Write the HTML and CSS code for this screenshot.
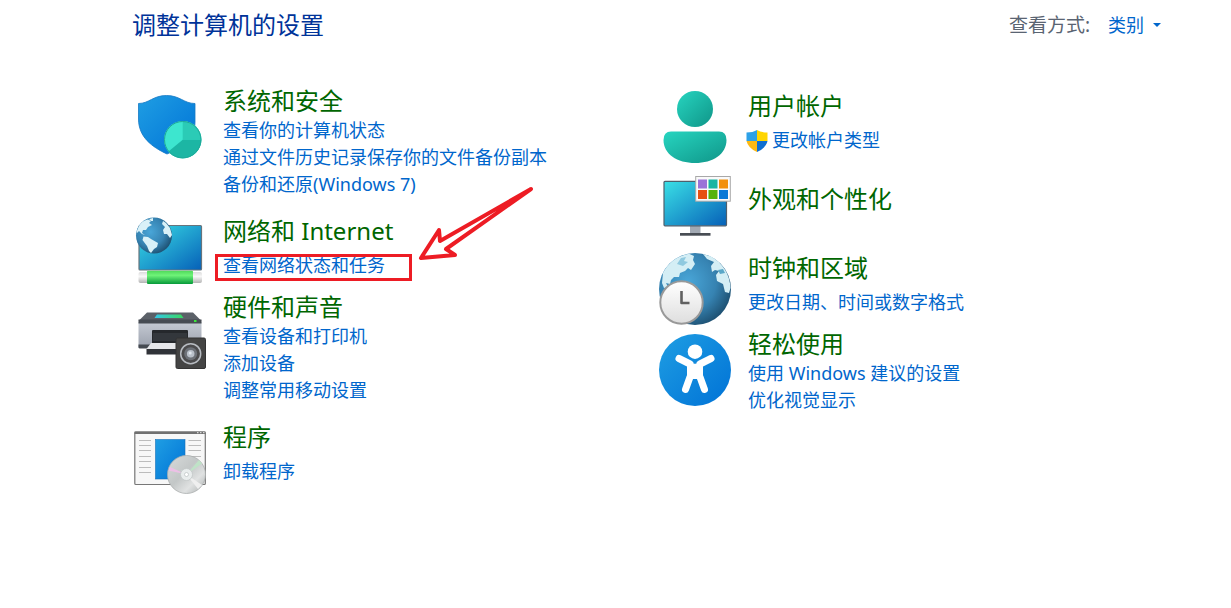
FILE: index.html
```html
<!DOCTYPE html>
<html lang="zh-CN">
<head>
    <meta charset="UTF-8">
    <meta name="viewport" content="width=device-width, initial-scale=1.0">
    <title>控制面板</title>
    <link rel="stylesheet" href="styles.css">
</head>
<body>
    <!-- Shared gradients -->
    <svg class="defs" width="0" height="0" aria-hidden="true">
        <defs>
            <linearGradient id="blue" x1="0" y1="0" x2="1" y2="1">
                <stop offset="0" stop-color="#1f9ee3"/>
                <stop offset="1" stop-color="#0072d6"/>
            </linearGradient>
            <linearGradient id="screen" x1="0" y1="0" x2="1" y2="1">
                <stop offset="0" stop-color="#3ae0e6"/>
                <stop offset="1" stop-color="#0660b8"/>
            </linearGradient>
            <linearGradient id="teal" x1="0" y1="0" x2="1" y2="1">
                <stop offset="0" stop-color="#27d5c0"/>
                <stop offset="1" stop-color="#0f9588"/>
            </linearGradient>
            <radialGradient id="ocean" cx="0.4" cy="0.4" r="0.65">
                <stop offset="0" stop-color="#49a6d8"/>
                <stop offset="0.6" stop-color="#3683b2"/>
                <stop offset="1" stop-color="#1d4f70"/>
            </radialGradient>
            <linearGradient id="cable" x1="0" y1="0" x2="0" y2="1">
                <stop offset="0" stop-color="#4fd95a"/>
                <stop offset="0.35" stop-color="#6ff378"/>
                <stop offset="1" stop-color="#069a3a"/>
            </linearGradient>
            <linearGradient id="cap" x1="0" y1="0" x2="0" y2="1">
                <stop offset="0" stop-color="#dcdcdc"/>
                <stop offset="0.4" stop-color="#f8f8f8"/>
                <stop offset="1" stop-color="#b4b4b4"/>
            </linearGradient>
            <linearGradient id="printer" x1="0" y1="0" x2="0" y2="1">
                <stop offset="0" stop-color="#c5cad3"/>
                <stop offset="1" stop-color="#9aa0ac"/>
            </linearGradient>
            <linearGradient id="glass" x1="0" y1="0" x2="1" y2="0">
                <stop offset="0" stop-color="#35c8e8"/>
                <stop offset="1" stop-color="#38d860"/>
            </linearGradient>
            <linearGradient id="disc" x1="0" y1="0" x2="1" y2="1">
                <stop offset="0" stop-color="#d8dbdb"/>
                <stop offset="0.45" stop-color="#c3c7c7"/>
                <stop offset="0.7" stop-color="#e0e2e2"/>
                <stop offset="1" stop-color="#a9adad"/>
            </linearGradient>
            <linearGradient id="dial" x1="0" y1="0" x2="0" y2="1">
                <stop offset="0" stop-color="#ffffff"/>
                <stop offset="1" stop-color="#dedede"/>
            </linearGradient>
        </defs>
    </svg>

    <header class="page-header">
        <h1>调整计算机的设置</h1>
        <div class="view-by">
            <label for="view">查看方式:</label>
            <span class="select-wrap">
                <select id="view">
                    <option selected>类别</option>
                    <option>大图标</option>
                    <option>小图标</option>
                </select>
            </span>
        </div>
    </header>

    <main class="categories">
        <div class="column">
            <section class="item multi">
                <svg class="icon" viewBox="0 0 72 72" aria-hidden="true">
                    <path d="M4.500 12.500C15 12.500 19 4.500 32.500 4.500S50 12.500 61 12.500V31C61 48 48 57 33 63C18 56 4.500 46 4.500 28Z" fill="url(#blue)" stroke="#1578c4" stroke-width="0.800"/>
                    <circle cx="48.700" cy="48.700" r="18.700" fill="#3de6cf"/>
                    <path d="M48.700 48.700V30A18.700 18.700 0 0 1 67.400 48.700Z" fill="#2bcbb6"/>
                    <path d="M48.700 48.700H67.400A18.700 18.700 0 0 1 34.500 60.500Z" fill="#1cb6a4"/>
                    <circle cx="48.700" cy="48.700" r="18.200" fill="none" stroke="#1fa898" stroke-width="1"/>
                </svg>
                <div class="text">
                    <h2><a href="#">系统和安全</a></h2>
                    <ul>
                        <li><a href="#">查看你的计算机状态</a></li>
                        <li><a href="#">通过文件历史记录保存你的文件备份副本</a></li>
                        <li><a href="#">备份和还原(Windows 7)</a></li>
                    </ul>
                </div>
            </section>

            <section class="item">
                <svg class="icon" viewBox="0 0 72 72" aria-hidden="true">
                    <rect x="5" y="9.500" width="62.500" height="44.500" rx="1" fill="url(#screen)" stroke="#68747c" stroke-width="1.200"/>
                    <rect x="4.500" y="56" width="63.500" height="11" rx="2" fill="url(#cap)"/>
                    <rect x="13" y="54.700" width="46" height="13.300" rx="1" fill="url(#cable)"/>
                    <circle cx="20" cy="19.500" r="18" fill="url(#ocean)"/>
                    <g fill="#d9f1f8">
                        <path d="M4.500 11C7 6 11 4 14 3.500L17 5L15 7L18 9L14 11L12 14L9 14L8 17L11 19L8 18L5 15L3 17L2.500 16Z"/>
                        <path d="M15 3L19 2L19 5L17 5Z"/>
                        <path d="M9.500 20.500L14 21L17 23L24 27L23 31L20 33L17 37L15 35L13 30L8.500 24Z"/>
                        <path d="M29 5L32 7L36 12L38 19L36 22L33 18L30 18L29 14L31 11L28 8Z"/>
                    </g>
                </svg>
                <div class="text">
                    <h2><a href="#">网络和 Internet</a></h2>
                    <ul>
                        <li class="marked"><a href="#">查看网络状态和任务</a></li>
                    </ul>
                </div>
                <svg class="arrow" viewBox="0 0 120 80" aria-hidden="true">
                    <path d="M116 6L25 58L24 47L6 75L40 72L31 66Z"/>
                </svg>
            </section>

            <section class="item multi">
                <svg class="icon" viewBox="0 0 72 72" aria-hidden="true">
                    <path d="M13 15.500H59L67.500 24H4.500Z" fill="#5b6168"/>
                    <path d="M23 17.500H47L49.500 21H20.500Z" fill="url(#glass)"/>
                    <path d="M4.500 25H67.500V51H4.500Z" fill="url(#printer)"/>
                    <path d="M4.500 22.500H67.500V26.500H4.500ZM4.500 47.500H67.500V50Q67.500 51.500 66 51.500H6Q4.500 51.500 4.500 50Z" fill="#464b52"/>
                    <rect x="60" y="23" width="2.500" height="2" fill="#39e639"/>
                    <path d="M18 34Q18 33 19 33H53Q54 33 54 34V48H18Z" fill="#25282c"/>
                    <path d="M19 36H53V44H19Z" fill="#33373c"/>
                    <path d="M17 46H55V52H12.500Z" fill="#e6e7ea"/>
                    <path d="M12.500 52H58V57.500H12.500Z" fill="#303338"/>
                    <rect x="42" y="41" width="29.500" height="30.500" rx="1.500" fill="#444" stroke="#333" stroke-width="1"/>
                    <circle cx="56.700" cy="56.700" r="10" fill="#4b4b4d" stroke="#b7bbc1" stroke-width="1.500"/>
                    <circle cx="56.700" cy="56.700" r="6.500" fill="#6d7178"/>
                    <circle cx="56.700" cy="56.700" r="3.800" fill="#b9c0ca"/>
                    <circle cx="56.200" cy="56" r="1.500" fill="#e1e7ef"/>
                </svg>
                <div class="text">
                    <h2><a href="#">硬件和声音</a></h2>
                    <ul>
                        <li><a href="#">查看设备和打印机</a></li>
                        <li><a href="#">添加设备</a></li>
                        <li><a href="#">调整常用移动设置</a></li>
                    </ul>
                </div>
            </section>

            <section class="item">
                <svg class="icon" viewBox="0 1 72 72" aria-hidden="true">
                    <rect x="0.800" y="11" width="70.500" height="52.500" rx="1" fill="#f7f7f7" stroke="#777" stroke-width="1.200"/>
                    <path d="M0.500 10.500H71.500V13H0.500Z" fill="#707070"/>
                    <path d="M63 11.700H64.500M66 11.700H67.500M69 11.700H70.500" stroke="#eee"/>
                    <path d="M5 19.500H17M5 24.500H17M5 29.500H17M5 35.500H17M5 40.500H17M5 46.500H17M5 51.500H17M54.500 19.500H67M54.500 24.500H67M54.500 29.500H67M54.500 35.500H67" stroke="#bcbcbc"/>
                    <rect x="21.500" y="18.500" width="29.500" height="39.500" fill="url(#blue)" stroke="#1870b8" stroke-width="0.600"/>
                    <circle cx="52.500" cy="53.500" r="19" fill="url(#disc)" stroke="#a9adad" stroke-width="0.800"/>
                    <path d="M52.500 53.500L65 39L68 42.500Z" fill="#bfe3c7"/>
                    <path d="M52.500 53.500L34.500 49.500L36 46Z" fill="#ecc0e6"/>
                    <path d="M52.500 53.500L68 64L64 68Z" fill="#efefef"/>
                    <circle cx="52.500" cy="53.500" r="6" fill="#e9eded" stroke="#c2c7c7" stroke-width="0.800"/>
                    <circle cx="52.500" cy="53.500" r="2" fill="#fff" stroke="#b2b8b8" stroke-width="0.600"/>
                </svg>
                <div class="text">
                    <h2><a href="#">程序</a></h2>
                    <ul>
                        <li><a href="#">卸载程序</a></li>
                    </ul>
                </div>
            </section>
        </div>

        <div class="column column-right">
            <section class="item">
                <svg class="icon" viewBox="0 0 72 72" aria-hidden="true">
                    <circle cx="36" cy="18" r="18" fill="url(#teal)"/>
                    <path d="M12 40.500H60Q67.500 40.500 67.500 49C67.500 63 54 72 36 72S4.500 63 4.500 49Q4.500 40.500 12 40.500Z" fill="url(#teal)"/>
                </svg>
                <div class="text">
                    <h2><a href="#">用户帐户</a></h2>
                    <ul>
                        <li class="with-shield">
                            <svg class="shield" viewBox="0 0 22 22" aria-hidden="true">
                                <path d="M11 0Q7 2.500 0.500 2.500V11H11Z" fill="#2da1e8"/>
                                <path d="M11 0Q15 2.500 21.500 2.500V11H11Z" fill="#ffd500"/>
                                <path d="M0.500 11Q2 18 11 22V11Z" fill="#fdb913"/>
                                <path d="M21.500 11Q20 18 11 22V11Z" fill="#0f6fd1"/>
                            </svg>
                            <a href="#">更改帐户类型</a>
                        </li>
                    </ul>
                </div>
            </section>

            <section class="item no-links">
                <svg class="icon" viewBox="0 0 72 72" aria-hidden="true">
                    <rect x="31" y="54" width="10.500" height="7" fill="#a2a9b3"/>
                    <rect x="21" y="61" width="30.500" height="2.700" fill="#484d54"/>
                    <rect x="5" y="9.300" width="62.500" height="44.500" rx="1" fill="url(#screen)" stroke="#4f5f6c" stroke-width="1.200"/>
                    <rect x="36.700" y="4.500" width="34.600" height="24.700" fill="#fafafa" stroke="#a8a8a8"/>
                    <path d="M39 7.500h9v9h-9z" fill="#9b72d8"/>
                    <path d="M49.500 7.500h9v9h-9z" fill="#1ab5a2"/>
                    <path d="M60 7.500h9v9h-9z" fill="#f2900d"/>
                    <path d="M39 18h9v9h-9z" fill="#e75012"/>
                    <path d="M49.500 18h9v9h-9z" fill="#54b20b"/>
                    <path d="M60 18h9v9h-9z" fill="#0878d6"/>
                </svg>
                <div class="text">
                    <h2><a href="#">外观和个性化</a></h2>
                </div>
            </section>

            <section class="item">
                <svg class="icon" viewBox="0 0 72 72" aria-hidden="true">
                    <circle cx="36" cy="36" r="36" fill="url(#ocean)"/>
                    <g fill="#d4eef5">
                        <path d="M4 20C9 10 18 3 30 0.700L35 3L34 7L36 11L32 17L29 15L26 18L21 20L20 24L15 24L12 27L11 31L7 30L9 34L5 35L3 30Z"/>
                        <path d="M22 5L27 4L25 8L29 9L24 13L18 11Z" fill="#8fc9df"/>
                        <path d="M44 1L52 3.500C64 10 71 22 71.500 35L70 40L66 39L64 31L58 28L57 22L60 18L56 17L53 19L52 13L55 9L48 6Z"/>
                        <path d="M59 17L64 16L66 20L61 21Z" fill="#5aa7c8"/>
                    </g>
                    <circle cx="22.500" cy="49.500" r="21.200" fill="url(#dial)" stroke="#999" stroke-width="2"/>
                    <path d="M22.500 38V50H30.500" fill="none" stroke="#606060" stroke-width="2.600" stroke-linejoin="round"/>
                </svg>
                <div class="text">
                    <h2><a href="#">时钟和区域</a></h2>
                    <ul>
                        <li><a href="#">更改日期、时间或数字格式</a></li>
                    </ul>
                </div>
            </section>

            <section class="item multi">
                <svg class="icon" viewBox="0 0 72 72" aria-hidden="true">
                    <circle cx="36" cy="36" r="36" fill="url(#blue)"/>
                    <circle cx="36" cy="17.700" r="7.300" fill="#fff"/>
                    <path d="M28 28.500Q36 31 44 28.500V45H28Z" fill="#fff"/>
                    <path d="M20 24.500L31 30M52 24.500L41 30M31 43L26.500 55.500M41 43L45.500 55.500" stroke="#fff" stroke-width="7" stroke-linecap="round"/>
                </svg>
                <div class="text">
                    <h2><a href="#">轻松使用</a></h2>
                    <ul>
                        <li><a href="#">使用 Windows 建议的设置</a></li>
                        <li><a href="#">优化视觉显示</a></li>
                    </ul>
                </div>
            </section>
        </div>
    </main>
</body>
</html>
```
FILE: styles.css
```css
*, *::before, *::after {
    box-sizing: border-box;
}

body {
    margin: 0;
    background: #ffffff;
    font-family: "Noto Sans", "Noto Sans CJK SC", sans-serif;
    font-size: 18px;
    line-height: 27px;
    color: #5a6472;
}

h1, h2, ul {
    margin: 0;
    padding: 0;
    font-weight: 400;
    list-style: none;
}

a {
    color: #0066cc;
    text-decoration: none;
}

a:hover {
    text-decoration: underline;
}

.defs {
    position: absolute;
}

/* Header */
.page-header {
    display: flex;
    justify-content: space-between;
    align-items: center;
    padding: 9px 70px 0 132px;
}

h1 {
    font-size: 24px;
    line-height: 32px;
    color: #003399;
}

.view-by {
    display: flex;
    align-items: center;
    gap: 18px;
}

.view-by label {
    font-size: 19px;
}

.select-wrap {
    display: flex;
    align-items: center;
    gap: 8px;
}

.select-wrap::after {
    content: "";
    border: 4px solid transparent;
    border-top-color: #0066cc;
    border-bottom: 0;
}

select {
    appearance: none;
    padding: 0;
    border: 0;
    background: none;
    font: inherit;
    color: #0066cc;
    width: 37px;
    cursor: pointer;
}

/* Categories */
.categories {
    display: grid;
    grid-template-columns: 1fr 1fr;
    padding: 45px 47px 24px 134px;
}

.column-right {
    padding-top: 5px;
}

.item {
    position: relative;
    display: flex;
    align-items: flex-start;
    gap: 17px;
    min-height: 72px;
    margin-bottom: 4px;
}

.item.multi {
    min-height: 113px;
    margin-bottom: 17px;
}

.column-right .item:nth-child(-n+2) {
    margin-bottom: 9px;
}

.icon {
    flex: none;
    width: 72px;
    height: 72px;
}

.multi .icon {
    margin-top: 5px;
}

.text {
    margin-top: -1px;
}

h2 {
    font-size: 24px;
    line-height: 32px;
}

h2 a {
    color: #006600;
}

.item ul {
    margin-top: 5px;
}

.multi ul {
    margin-top: 0;
}

.no-links .text {
    padding-top: 12px;
}

.with-shield {
    display: flex;
    align-items: center;
    gap: 4px;
    margin-left: -2px;
}

.shield {
    width: 22px;
    height: 22px;
}

/* Red highlight */
.marked {
    position: relative;
}

.marked::after {
    content: "";
    position: absolute;
    top: 2px;
    left: -8px;
    width: 197px;
    height: 27px;
    border: 3px solid #ed1c24;
    pointer-events: none;
}

.arrow {
    position: absolute;
    top: -33px;
    left: 281px;
    width: 120px;
    height: 80px;
    fill: none;
    stroke: #ed1c24;
    stroke-width: 4;
    stroke-linejoin: round;
    pointer-events: none;
}
```
